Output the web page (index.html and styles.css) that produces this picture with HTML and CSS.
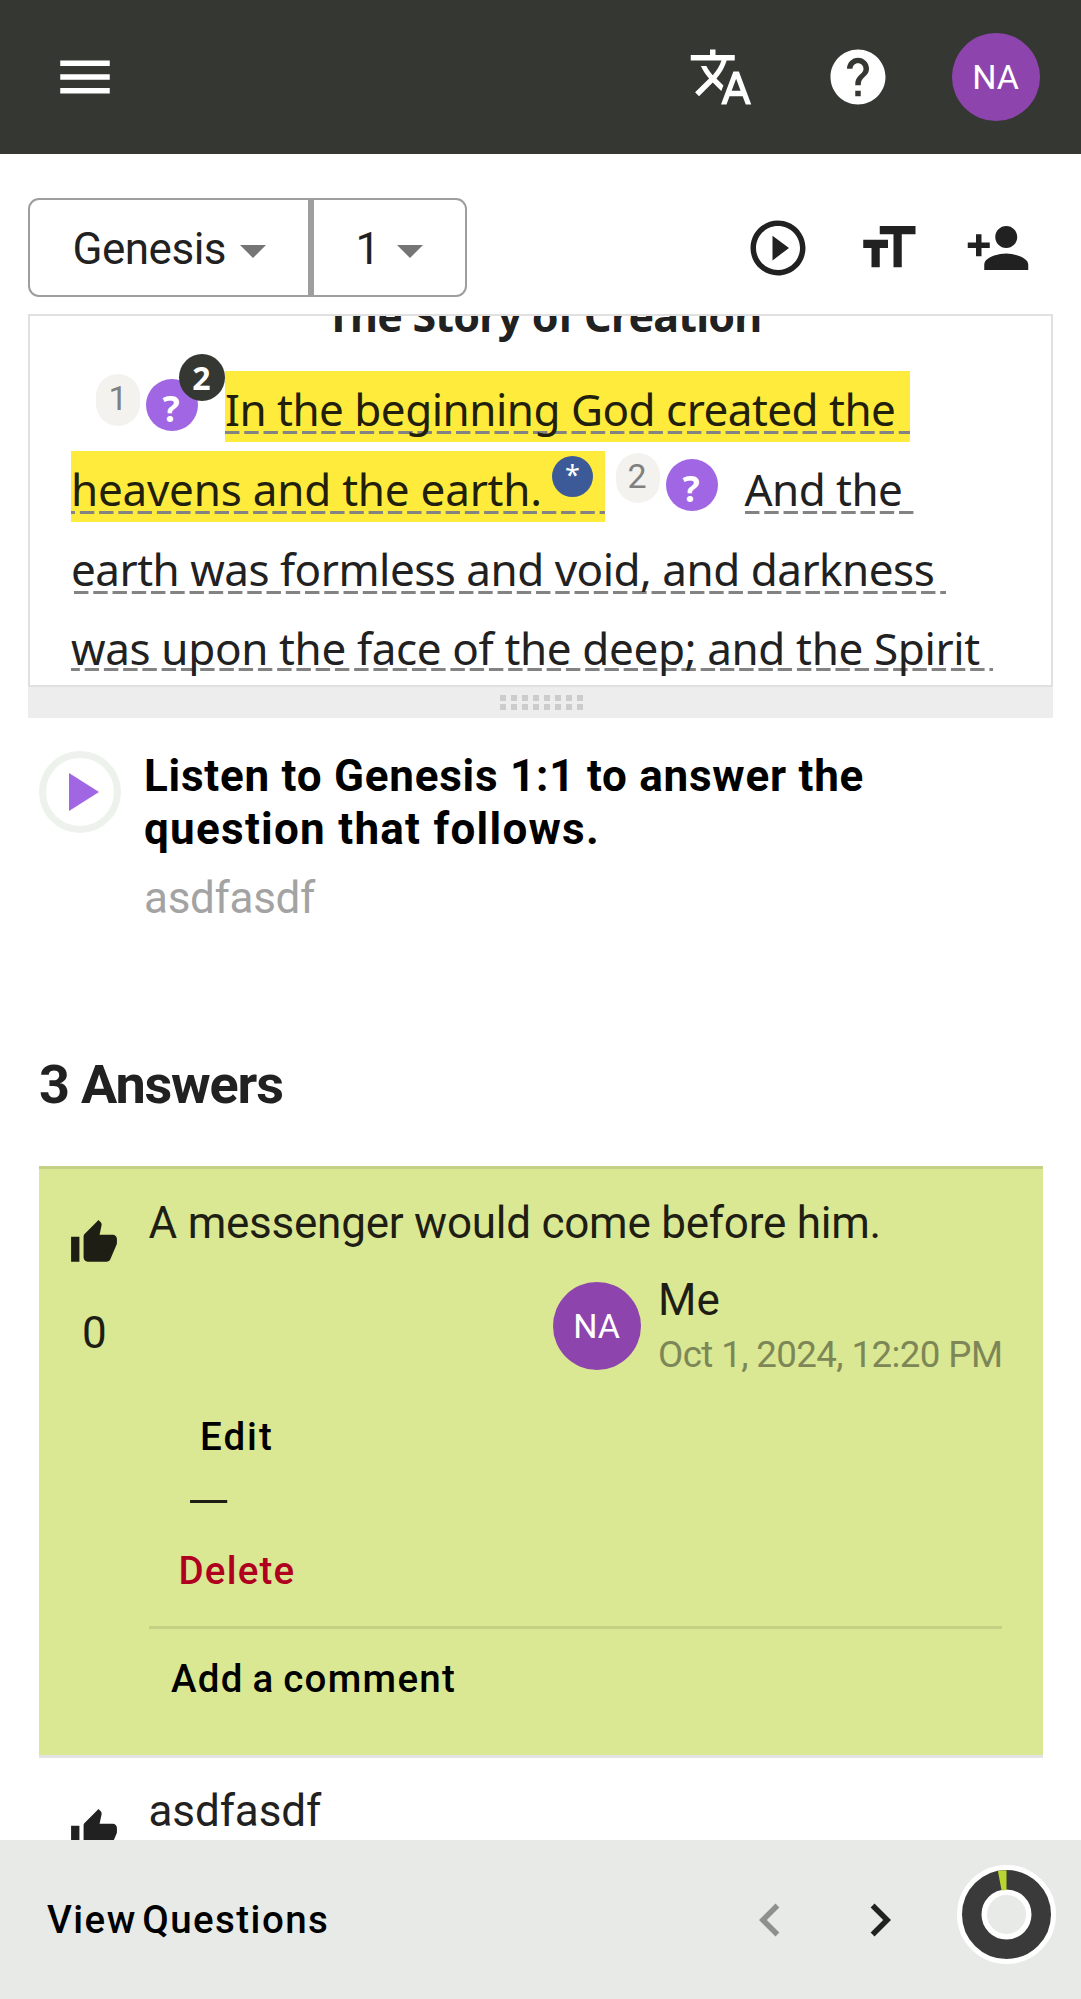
FILE: index.html
```html
<!DOCTYPE html>
<html lang="en">
<head>
<meta charset="utf-8">
<title>Genesis 1 – Community Checking</title>
<link rel="stylesheet" href="styles.css">
</head>
<body>
<div class="app">
  <header class="topbar">
    <svg class="icon" viewBox="0 0 24 24"><path d="M3 18h18v-2H3v2zm0-5h18v-2H3v2zm0-7v2h18V6H3z"/></svg>
    <div class="topbar-actions">
      <svg class="icon" viewBox="0 0 24 24"><path d="M12.87 15.07l-2.54-2.51.03-.03c1.74-1.94 2.98-4.17 3.71-6.53H17V4h-7V2H8v2H1v1.99h11.17C11.5 7.92 10.44 9.75 9 11.35 8.07 10.32 7.3 9.19 6.69 8h-2c.73 1.63 1.73 3.17 2.98 4.56l-5.09 5.02L4 19l5-5 3.11 3.11.76-2.04zM18.5 10h-2L12 22h2l1.12-3h4.75L21 22h2l-4.5-12zm-2.62 7l1.62-4.33L19.12 17h-3.24z"/></svg>
      <svg class="icon" viewBox="0 0 24 24"><path d="M12 2C6.48 2 2 6.48 2 12s4.48 10 10 10 10-4.48 10-10S17.52 2 12 2zm1 17h-2v-2h2v2zm2.07-7.75l-.9.92C13.45 12.9 13 13.5 13 15h-2v-.5c0-1.1.45-2.1 1.17-2.83l1.24-1.26c.37-.36.59-.86.59-1.41 0-1.1-.9-2-2-2s-2 .9-2 2H8c0-2.21 1.79-4 4-4s4 1.79 4 4c0 .88-.36 1.68-.93 2.25z"/></svg>
      <span class="avatar">NA</span>
    </div>
  </header>

  <main class="content">
    <div class="toolbar">
      <div class="selects">
        <div class="select book"><span>Genesis</span><svg class="caret" viewBox="0 0 26 13"><path d="M0 0h26L13 13z"/></svg></div>
        <div class="select chapter"><span>1</span><svg class="caret" viewBox="0 0 26 13"><path d="M0 0h26L13 13z"/></svg></div>
      </div>
      <div class="tools">
        <svg class="icon" viewBox="0 0 24 24"><path d="M10 16.5l6-4.5-6-4.5v9zM12 2C6.48 2 2 6.48 2 12s4.48 10 10 10 10-4.48 10-10S17.52 2 12 2zm0 18c-4.41 0-8-3.59-8-8s3.59-8 8-8 8 3.59 8 8-3.59 8-8 8z"/></svg>
        <svg class="icon" viewBox="0 0 24 24"><path d="M9 4v3h5v12h3V7h5V4H9zm-6 8h3v7h3v-7h3V9H3v3z"/></svg>
        <svg class="icon" viewBox="0 0 24 24"><path d="M15 12c2.21 0 4-1.79 4-4s-1.79-4-4-4-4 1.79-4 4 1.79 4 4 4zm-9-2V7H4v3H1v2h3v3h2v-3h3v-2H6zm9 4c-2.67 0-8 1.34-8 4v2h16v-2c0-2.66-5.33-4-8-4z"/></svg>
      </div>
    </div>

    <section class="scripture">
      <h2 class="heading">The Story of Creation</h2>
      <div class="line line-1">
        <span class="verse">1</span>
        <span class="question-mark">?<span class="badge">2</span></span>
        <span class="run marked">In the beginning God created the</span>
      </div>
      <div class="line line-2">
        <span class="run marked">heavens and the earth.<span class="note">*</span></span>
        <span class="verse">2</span>
        <span class="question-mark">?</span>
        <span class="run last">And the</span>
      </div>
      <div class="line line-3"><span class="run">earth was formless and void, and darkness</span></div>
      <div class="line line-4"><span class="run">was upon the face of the deep; and the Spirit</span></div>
    </section>
    <div class="resizer">
      <span class="dots"><i></i><i></i><i></i><i></i><i></i><i></i><i></i><i></i><i></i><i></i><i></i><i></i><i></i><i></i><i></i><i></i></span>
    </div>

    <section class="question">
      <span class="play"><svg viewBox="0 0 30 38"><path d="M0 0l30 19L0 38z"/></svg></span>
      <div class="question-text">
        <h1><span class="first">Listen to Genesis 1:1 to answer the</span><br><span class="second">question that follows.</span></h1>
        <p>asdfasdf</p>
      </div>
    </section>

    <h2 class="count">3 Answers</h2>

    <article class="answer mine">
      <div class="votes">
        <svg class="thumb" viewBox="0 0 24 24"><path d="M1 21h4V9H1v12zm22-11c0-1.1-.9-2-2-2h-6.31l.95-4.57.03-.32c0-.41-.17-.79-.44-1.06L14.17 1 7.59 7.59C7.22 7.95 7 8.45 7 9v10c0 1.1.9 2 2 2h9c.83 0 1.54-.5 1.84-1.22l3.02-7.05c.09-.23.14-.47.14-.73v-2z"/></svg>
        <span>0</span>
      </div>
      <div class="body">
        <p class="text">A messenger would come before him.</p>
        <div class="author">
          <span class="avatar">NA</span>
          <div><div class="name">Me</div><div class="date">Oct 1, 2024, 12:20 PM</div></div>
        </div>
        <div class="actions">
          <button class="edit">Edit</button>
          <span class="dash">—</span>
          <button class="delete">Delete</button>
        </div>
        <button class="comment">Add a comment</button>
      </div>
    </article>
    <article class="answer">
      <div class="votes">
        <svg class="thumb" viewBox="0 0 24 24"><path d="M1 21h4V9H1v12zm22-11c0-1.1-.9-2-2-2h-6.31l.95-4.57.03-.32c0-.41-.17-.79-.44-1.06L14.17 1 7.59 7.59C7.22 7.95 7 8.45 7 9v10c0 1.1.9 2 2 2h9c.83 0 1.54-.5 1.84-1.22l3.02-7.05c.09-.23.14-.47.14-.73v-2z"/></svg>
      </div>
      <div class="body"><p class="text short">asdfasdf</p></div>
    </article>
  </main>

  <footer class="bottombar">
    <button class="view">View Questions</button>
    <div class="pager">
      <svg class="icon off" viewBox="0 0 24 24"><path d="M15.41 7.41L14 6l-6 6 6 6 1.41-1.41L10.83 12z"/></svg>
      <svg class="icon" viewBox="0 0 24 24"><path d="M10 6L8.59 7.41 13.17 12l-4.58 4.59L10 18l6-6z"/></svg>
      <svg class="donut" viewBox="0 0 99 99">
        <circle cx="49.5" cy="49.5" r="34.5" fill="none" stroke="#fff" stroke-width="30"/>
        <circle cx="49.5" cy="49.5" r="34.75" fill="none" stroke="#3a3a3a" stroke-width="19.5"/>
        <path d="M49.5 5.2v19.8a24.5 24.5 0 0 0-4.9.5L40.9 6a44.3 44.3 0 0 1 8.6-.8z" fill="#b8d432"/>
      </svg>
    </div>
  </footer>
</div>
</body>
</html>
```
FILE: styles.css
```css
* { box-sizing: border-box; }
body { margin: 0; background: #fff; color: #212121; font-family: Roboto, sans-serif; font-size: 44px; }
h1, h2, p { margin: 0; }
button { display: block; border: 0; padding: 0; background: none; color: #000; font: 500 38.5px/46px Roboto, sans-serif; white-space: nowrap; }
.app { display: flex; flex-direction: column; height: 1999px; overflow: hidden; }
.icon { display: block; flex: none; width: 66px; height: 66px; fill: currentColor; }

.topbar { display: flex; flex: none; align-items: center; justify-content: space-between; height: 154px; padding: 0 41.5px 0 52px; background: #353832; color: #fff; }
.topbar-actions { display: flex; align-items: center; }
.topbar-actions .icon { margin-right: 71px; }
.topbar-actions .icon + .icon { margin-right: 60.5px; }
.avatar { display: flex; flex: none; align-items: center; justify-content: center; width: 88px; height: 88px; border-radius: 50%; background: #8e44ad; color: #fff; font-size: 34px; }

.content { display: flex; flex-direction: column; flex: 1; min-height: 0; overflow: hidden; }
.toolbar { display: flex; flex: none; justify-content: space-between; height: 160px; padding: 44px 50px 0 28px; }
.selects { display: flex; height: 99px; }
.select { display: flex; align-items: center; padding-top: 3px; border: 2px solid #9e9e9e; }
.book { width: 283px; padding-left: 42.5px; border-right-width: 3px; border-radius: 11px 0 0 11px; letter-spacing: -.5px; }
.chapter { width: 156px; padding-left: 41.5px; border-left-width: 3px; border-radius: 0 11px 11px 0; }
.caret { width: 26px; height: 13px; margin: 5px 0 0 14px; fill: #757575; }
.chapter .caret { margin-left: 16.5px; }
.tools { display: flex; gap: 44px; padding-top: 17px; }

.scripture { flex: none; height: 373px; margin: 0 28px; border: 2px solid #e0e0e0; overflow: hidden; font-family: "Noto Sans", sans-serif; }
.heading { height: 83.5px; margin: -30.5px 0 0 296px; font-size: 43px; line-height: 60px; letter-spacing: -.8px; white-space: nowrap; }
.line { display: flex; align-items: flex-start; height: 79.75px; padding-left: 41px; }
.run { display: flex; flex: none; height: 71px; margin-top: 2px; line-height: 76px; white-space: nowrap; background: linear-gradient(90deg, #838383 14.4px, transparent 0) 0 60px / 19.25px 2.6px repeat-x; }
.marked { background-color: #ffeb3b; color: #21200c; }
.line-1 { padding-left: 66px; }
.line-1 .run { width: 685px; margin-left: 27.5px; letter-spacing: -.51px; }
.line-2 .marked { width: 534px; background-position-x: -10.4px; letter-spacing: -.23px; }
.line-2 .last { width: 169px; margin-left: 27px; letter-spacing: -.55px; }
.line-3 .run { width: 875px; background-position-x: 3px; letter-spacing: -.5px; }
.line-4 .run { width: 922px; background-position: -5.6px 58px; letter-spacing: -.36px; }
.verse { display: flex; flex: none; align-items: center; justify-content: center; width: 44px; height: 52px; margin-top: 4.5px; padding-bottom: 3px; border-radius: 22px; background: #f3f2ee; color: #808080; font: 400 34px Roboto, sans-serif; }
.line-2 .verse { height: 50px; margin: 4px 0 0 11px; padding-right: 2px; }
.question-mark { position: relative; display: flex; flex: none; align-items: center; justify-content: center; width: 52px; height: 52px; margin: 10px 0 0 5.5px; padding: 8px 1px 0 0; border-radius: 50%; background: #a066e3; color: #fff; font-weight: 700; font-size: 36px; line-height: 44px; }
.badge { position: absolute; left: 33px; top: -25px; display: flex; align-items: center; justify-content: center; width: 46px; height: 47px; border-radius: 50%; background: #353832; font-size: 32px; }
.note { display: flex; justify-content: center; width: 41px; height: 41px; margin: 5.5px 0 0 10px; border-radius: 50%; background: #3d5a98; color: #fff; font-size: 27px; line-height: 38px; }
.resizer { display: flex; flex: none; align-items: center; justify-content: center; height: 31px; margin: 0 28px; background: #ededed; }
.dots { display: grid; grid-template-columns: repeat(8, 6px); gap: 2.5px 5px; margin-left: 2px; }
.dots i { height: 6px; background: #ccc; }

.question { display: flex; flex: none; gap: 23px; padding: 32px 39px 0; }
.play { display: flex; flex: none; align-items: center; justify-content: center; width: 82px; height: 82px; margin-top: 1px; padding-left: 9px; border: 7px solid #eef2ed; border-radius: 50%; }
.play svg { width: 30px; height: 38px; margin-right: 2px; fill: #a066e3; }
h1 { color: #000; font-size: 44px; line-height: 53px; white-space: nowrap; }
.first { letter-spacing: .76px; }
.second { letter-spacing: 1.27px; }
.question-text p { margin-top: 16px; color: #a3a3a3; line-height: 53px; letter-spacing: -.3px; }
.count { flex: none; margin: 128px 0 49px 39px; font-size: 54px; line-height: 64px; letter-spacing: -1.15px; }

.answer { display: flex; flex: none; margin: 0 38px 0 39px; padding: 24px 41px 0 29px; border-top: 3px solid #e3e3e3; }
.mine { height: 589px; border-color: #c4d185; background: #dae893; color: #1e1e14; }
.votes { display: flex; flex: none; flex-direction: column; align-items: center; gap: 39px; width: 51px; margin-right: 29.5px; padding-top: 25px; line-height: 52px; }
.votes span { padding-left: 1.5px; }
.thumb { width: 50px; height: 50px; fill: currentColor; }
.body { flex: 1; min-width: 0; }
.text { line-height: 60px; letter-spacing: -.24px; white-space: nowrap; }
.short { margin-top: -1px; letter-spacing: -.1px; }
.author { display: flex; margin: 21px 0 0 404px; }
.author .avatar { margin: 8px 17.5px 0 0; }
.name { line-height: 52px; }
.date { margin-top: 5.5px; color: #7d8657; font-size: 36.7px; line-height: 46px; letter-spacing: -.6px; white-space: nowrap; }
.actions { height: 251px; padding-top: 36px; border-bottom: 3px solid #c4d185; }
.edit { margin-left: 51.5px; letter-spacing: 2px; }
/* The dash reads as a thin rule between the two buttons. */
.dash { display: block; margin: 18px 0 20px 38px; font-size: 57px; font-weight: 300; line-height: 50px; }
.delete { margin-left: 30px; color: #b00020; letter-spacing: 1.2px; }
.comment { margin: 27.5px 0 0 22.5px; letter-spacing: 1.3px; word-spacing: -2.2px; }

.bottombar { display: flex; flex: none; align-items: center; justify-content: space-between; height: 159px; padding: 0 25px 0 47px; background: #e8eae7; color: #212121; }
.view { letter-spacing: 1.45px; word-spacing: -5.5px; }
.pager { display: flex; align-items: center; }
.pager .icon { margin-right: 44px; }
.pager .off { color: #8e908d; }
.donut { width: 99px; height: 99px; margin-bottom: 11px; }
```
